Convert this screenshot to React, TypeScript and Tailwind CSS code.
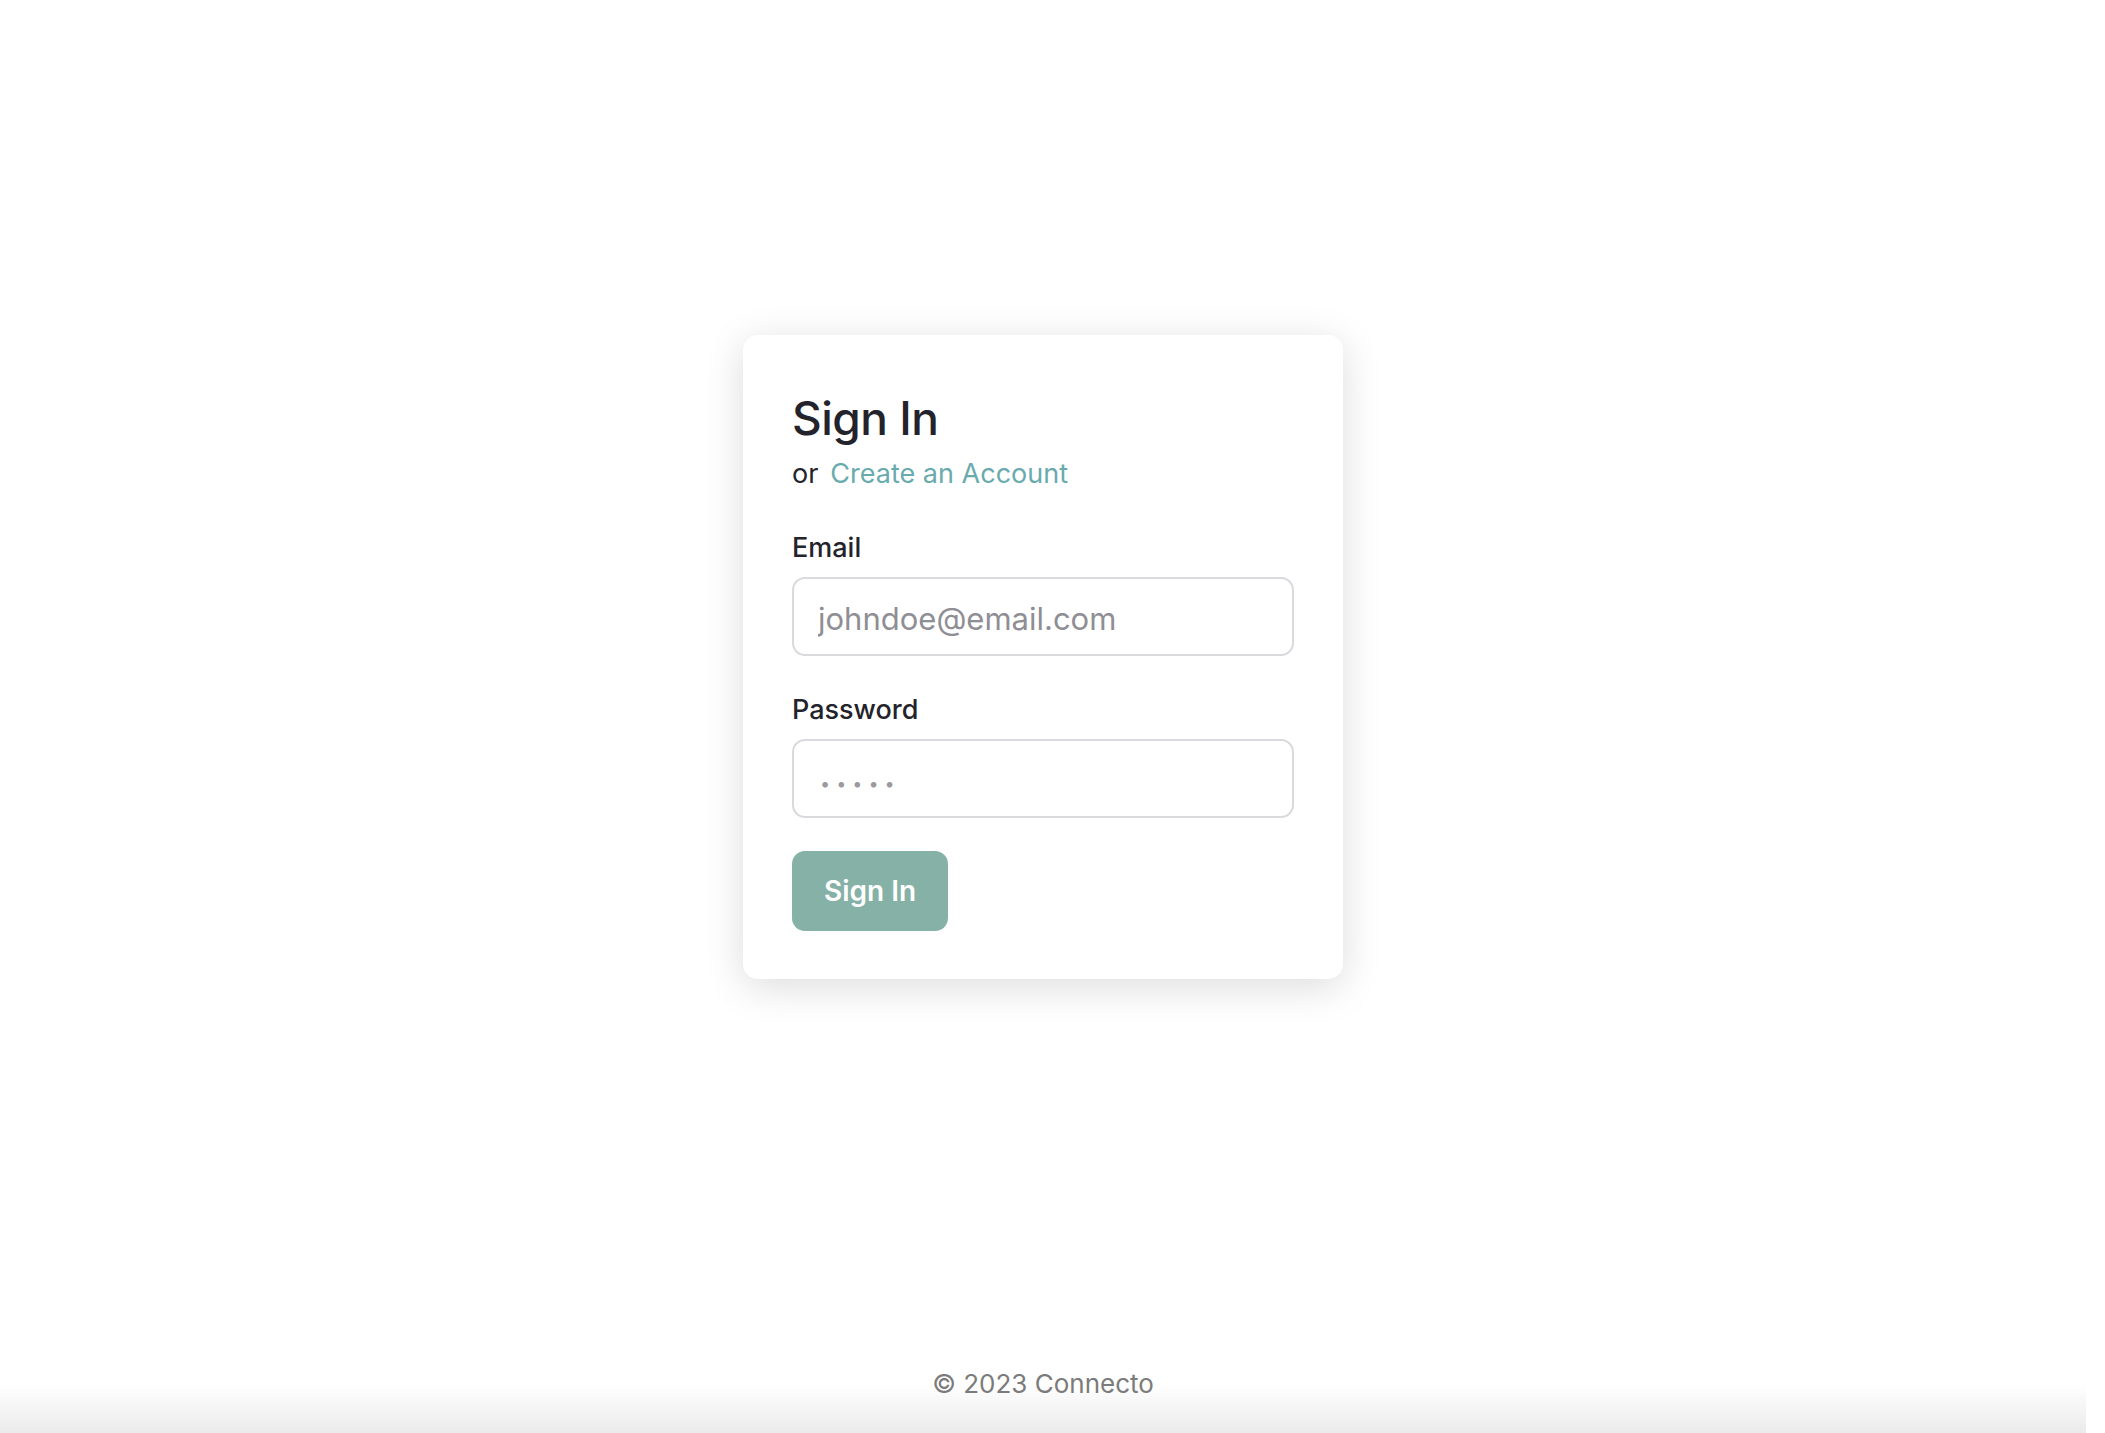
export default function App() {
  return (
    <div className="min-h-screen flex flex-col bg-white font-['Inter',sans-serif] pr-[19px]">
      <main className="flex-1 flex justify-center items-start pt-[335px]">
        <div className="w-[600px] bg-white rounded-[15px] shadow-[0_8px_40px_rgba(0,0,0,0.14)] px-[49px] pt-[55px] pb-[48px]">
          <h1 className="text-[46px] leading-[56px] font-medium text-[#23232b] tracking-[-0.5px]">Sign In</h1>
          <p className="mt-[11px] text-[27px] leading-[34px] text-[#23232b]">
            or<a href="#" className="ml-[12px] text-[#69abad]">Create an Account</a>
          </p>

          <form className="mt-[40px] flex flex-col" onSubmit={e => e.preventDefault()}>
            <label htmlFor="email" className="text-[27px] leading-[34px] font-medium text-[#23232b]">Email</label>
            <input
              id="email"
              type="email"
              placeholder="johndoe@email.com"
              className="mt-[12px] h-[79px] w-full rounded-[13px] border-2 border-[#d9d9de] pl-[24px] pr-4 pt-[4px] text-[31px] text-[#23232b] placeholder:text-[#8e8e94] outline-none"
            />

            <label htmlFor="password" className="mt-[37px] text-[27px] leading-[34px] font-medium text-[#23232b]">Password</label>
            <input
              id="password"
              type="password"
              placeholder="•••••"
              className="mt-[12px] h-[79px] w-full rounded-[13px] border-2 border-[#d9d9de] pl-[26px] pr-4 text-[31px] text-[#23232b] placeholder:text-[#9a9a9f] placeholder:text-[18px] placeholder:tracking-[6px] outline-none"
            />

            <div className="mt-[33px]">
              <button
                type="submit"
                className="h-[80px] w-[156px] rounded-[13px] bg-[#86b1a6] text-white text-[28px] font-semibold"
              >
                Sign In
              </button>
            </div>
          </form>
        </div>
      </main>
      <footer className="h-[99px] flex justify-center pt-[32px] text-[26px] leading-[36px] text-[#7b7b7b] bg-gradient-to-b from-white from-50% to-[#ebebeb]">
        © 2023 Connecto
      </footer>
    </div>
  )
}
